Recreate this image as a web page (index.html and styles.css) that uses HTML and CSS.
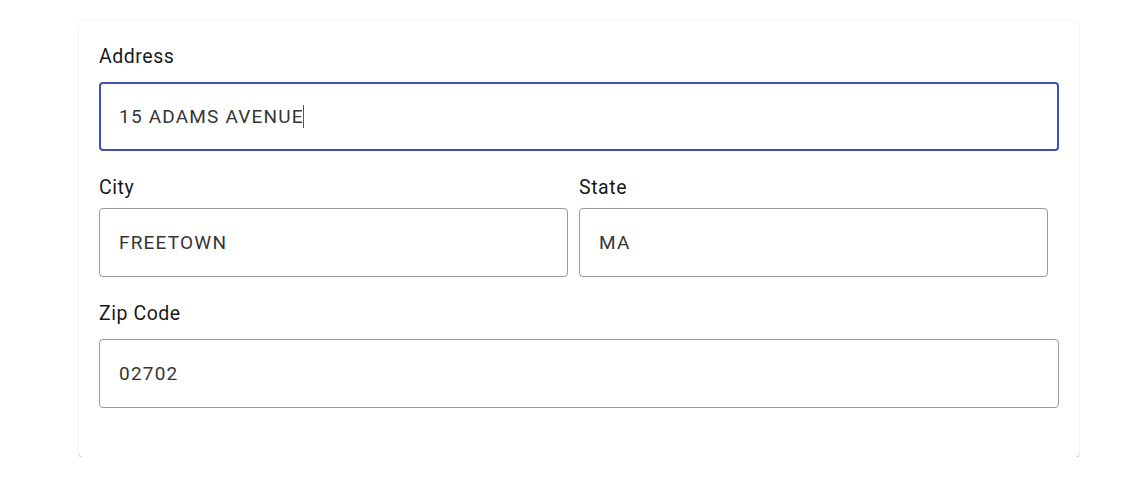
FILE: index.html
```html
<!DOCTYPE html>
<html lang="en">
<head>
<meta charset="utf-8">
<title>Address</title>
<link rel="stylesheet" href="styles.css">
</head>
<body>
<div class="page">
  <form class="card">
    <div class="field field-first">
      <label class="field-label">Address</label>
      <div class="field-box field-box-focused"><span class="field-value">15 ADAMS AVENUE</span><span class="caret"></span></div>
    </div>
    <div class="field-row">
      <div class="field field-half field-city">
        <label class="field-label">City</label>
        <div class="field-box"><span class="field-value">FREETOWN</span></div>
      </div>
      <div class="field field-half field-city">
        <label class="field-label">State</label>
        <div class="field-box"><span class="field-value">MA</span></div>
      </div>
    </div>
    <div class="field">
      <label class="field-label">Zip Code</label>
      <div class="field-box"><span class="field-value">02702</span></div>
    </div>
  </form>
</div>
</body>
</html>
```
FILE: styles.css
```css
html, body {
  margin: 0;
  padding: 0;
  background: #ffffff;
}

body {
  font-family: Roboto, "Liberation Sans", Arial, sans-serif;
}

.page {
  padding: 21px 0 0 79px;
}

.card {
  box-sizing: border-box;
  width: 1000px;
  padding: 26px 20px 49px 20px;
  background: #ffffff;
  border-radius: 4px;
  box-shadow: 0 1px 1px 0 rgba(0, 0, 0, 0.3), 0 0 2px 0 rgba(0, 0, 0, 0.1);
}

.field {
  display: flex;
  flex-direction: column;
  margin-top: 27px;
}

.field-first {
  margin-top: 0;
}

.field-row {
  display: grid;
  grid-template-columns: 1fr 1fr;
}

.field-half .field-box {
  margin-right: 11px;
}

.field-label {
  display: block;
  font-size: 19.5px;
  line-height: 20px;
  letter-spacing: 0.55px;
  color: rgba(0, 0, 0, 0.92);
  margin-bottom: 15px;
}

.field-city .field-label {
  margin-bottom: 10px;
}

.field-box {
  box-sizing: border-box;
  height: 69px;
  display: flex;
  align-items: center;
  padding-left: 19px;
  border: 1px solid #9a9a9a;
  border-radius: 4px;
  background: #ffffff;
}

.field-box-focused {
  border: 2px solid #3f51b5;
  padding-left: 18px;
}

.field-value {
  font-size: 19px;
  letter-spacing: 1.2px;
  color: #353535;
  white-space: nowrap;
}

.caret {
  display: inline-block;
  width: 1px;
  height: 23px;
  margin-left: -1px;
  background: #3f51b5;
}
```
